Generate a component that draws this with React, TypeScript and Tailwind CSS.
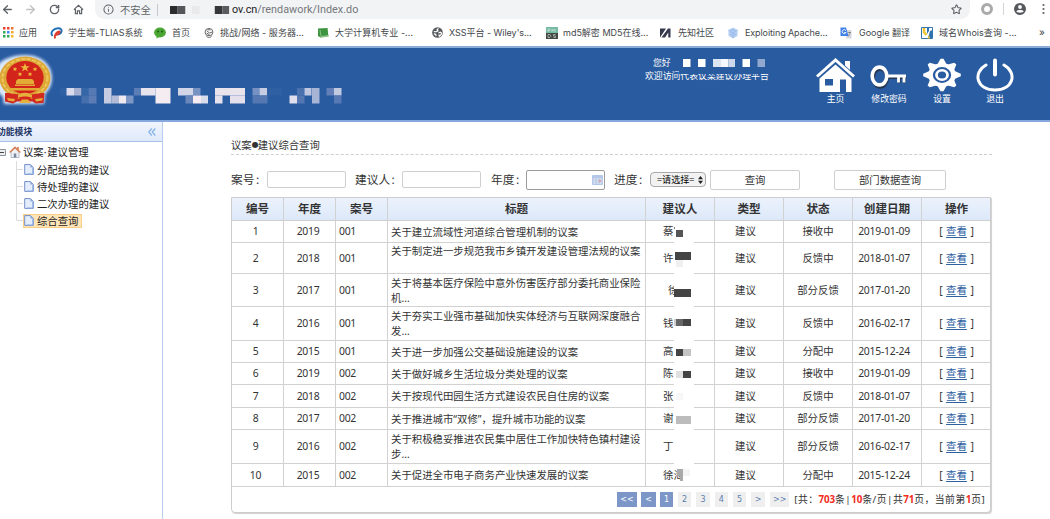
import React from "react";
import { ArrowLeft, ArrowRight, RotateCw, Star, Info } from "lucide-react";

const GRID =
  "grid grid-cols-[52px_52px_52px_258px_69px_69px_69px_69px_69px]";

type Block = [number, number, number, number, string];

interface Row {
  h: string;
  year: string;
  no: string;
  title: string[];
  name: string;
  pad?: string;
  status: string;
  date: string;
  blocks: Block[];
}

/* block coordinates are relative to the 20px wide strip beside each name */
const rows: Row[] = [
  { h: "h-[22px]", year: "2019", no: "001", title: ["关于建立流域性河道综合管理机制的议案"], name: "蔡", status: "接收中", date: "2019-01-09", blocks: [[0, 6, 1, 2, "#777"], [2, 9, 7, 7, "#555"]] },
  { h: "h-[31px]", year: "2018", no: "001", title: ["关于制定进一步规范我市乡镇开发建设管理法规的议案", ""], name: "许", status: "反馈中", date: "2018-01-07", blocks: [[1, 9, 16, 8, "#444"], [2, 17, 7, 7, "#f0f0f0"]] },
  { h: "h-[33px]", year: "2017", no: "001", title: ["关于将基本医疗保险中意外伤害医疗部分委托商业保险", "机…"], name: "徐", pad: "pl-[22px]", status: "部分反馈", date: "2017-01-20", blocks: [[0, 15, 17, 8, "#444"]] },
  { h: "h-[34px]", year: "2016", no: "001", title: ["关于夯实工业强市基础加快实体经济与互联网深度融合", "发…"], name: "钱", status: "反馈中", date: "2016-02-17", blocks: [[0, 12, 2, 7, "#ccc"], [2, 12, 7, 7, "#666"], [9, 12, 8, 7, "#444"]] },
  { h: "h-[22px]", year: "2015", no: "001", title: ["关于进一步加强公交基础设施建设的议案"], name: "高", status: "分配中", date: "2015-12-24", blocks: [[2, 8, 7, 7, "#444"], [9, 8, 8, 7, "#c4c4c4"]] },
  { h: "h-[22px]", year: "2019", no: "002", title: ["关于做好城乡生活垃圾分类处理的议案"], name: "陈", status: "接收中", date: "2019-01-09", blocks: [[2, 8, 7, 7, "#e0e0e0"], [9, 8, 8, 7, "#444"]] },
  { h: "h-[23px]", year: "2018", no: "002", title: ["关于按现代田园生活方式建设农民自住房的议案"], name: "张", status: "反馈中", date: "2018-01-07", blocks: [[2, 8, 7, 7, "#f7f7f7"]] },
  { h: "h-[22px]", year: "2017", no: "002", title: ["关于推进城市“双修”，提升城市功能的议案"], name: "谢", status: "部分反馈", date: "2017-01-20", blocks: [[2, 8, 15, 8, "#bcbcbc"]] },
  { h: "h-[34px]", year: "2016", no: "002", title: ["关于积极稳妥推进农民集中居住工作加快特色镇村建设", "步…"], name: "丁", status: "部分反馈", date: "2016-02-17", blocks: [] },
  { h: "h-[23px]", year: "2015", no: "002", title: ["关于促进全市电子商务产业快速发展的议案"], name: "徐海", status: "分配中", date: "2015-12-24", blocks: [[3, 5, 6, 7, "#aaa"], [6, 12, 3, 5, "#aaa"], [9, 5, 7, 7, "#f4f4f4"]] },
];

function HomeOutline() {
  return (
    <svg viewBox="0 0 12 12" className="h-[11px] w-[11px]" fill="none" stroke="#5f6368" strokeWidth="1.3">
      <path d="M1 6.2 6 1.4l5 4.8M2.6 5.4v5.2h2.2V7.4h2.4v3.2h2.2V5.4" />
    </svg>
  );
}

const bookmarks: { w: string; gap: string; text: string; track: string; icon: React.ReactNode }[] = [
  {
    w: "w-[47px]", gap: "gap-[5px]", text: "应用", track: "",
    icon: (
      <svg viewBox="0 0 11 11" className="h-[11px] w-[11px] shrink-0">
        {["#ea4335", "#ea4335", "#f0762c", "#34a853", "#4285f4", "#f4a52c", "#34a853", "#34a853", "#f4b72c"].map((c, i) => (
          <rect key={i} x={(i % 3) * 4} y={Math.floor(i / 3) * 4} width="2.5" height="2.5" fill={c} />
        ))}
      </svg>
    ),
  },
  {
    w: "w-[104px]", gap: "gap-[5px]", text: "学生端-TLIAS系统", track: "",
    icon: (
      <svg viewBox="0 0 13 12" className="h-[12px] w-[13px] shrink-0" fill="none">
        <path d="M2.500 9C-.5 5 4 1 8.500 1.200 13 1.500 12.500 6 8 7.500" stroke="#1f6fb5" strokeWidth="1.900" />
        <path d="M5 11.500C4 8 6.500 4.500 9.500 4.500c.5 2-2 3.300-4 3.500" stroke="#e03a30" strokeWidth="1.900" />
      </svg>
    ),
  },
  {
    w: "w-[50px]", gap: "gap-[6px]", text: "首页", track: "",
    icon: (
      <svg viewBox="0 0 12 12" className="h-[12px] w-[12px] shrink-0">
        <ellipse cx="6" cy="5.500" rx="5.900" ry="4.900" fill="#4aa733" />
        <path d="M2.500 9v2.500L6 9.500z" fill="#4aa733" />
        <circle cx="4" cy="4.500" r=".9" fill="#174f10" />
        <circle cx="8" cy="4.500" r=".9" fill="#174f10" />
      </svg>
    ),
  },
  {
    w: "w-[113px]", gap: "gap-[6px]", text: "挑战/网络 - 服务器...", track: "tracking-[0.05px]",
    icon: (
      <svg viewBox="0 0 11 12" className="h-[12px] w-[10px] shrink-0" fill="none" stroke="#666" strokeWidth="1.1">
        <ellipse cx="5.500" cy="5" rx="4.300" ry="4" />
        <path d="M3 3.500l3 2.500 3-1M3 6l3 2M2.500 9c1 2.500 5 2.500 6 0M4 2.500h3" />
      </svg>
    ),
  },
  {
    w: "w-[115px]", gap: "gap-[6px]", text: "大学计算机专业 -...", track: "tracking-[0.05px]",
    icon: (
      <svg viewBox="0 0 12 12" className="h-[12px] w-[12px] shrink-0">
        <path d="M1 1.500 10.500 1l1 8.500-8 1L1 9z" fill="#3f9440" />
        <path d="M3 3l1 6.500 7.500-1M4 10.300l7-1" stroke="#a9d7a4" strokeWidth=".7" fill="none" />
      </svg>
    ),
  },
  {
    w: "w-[114px]", gap: "gap-[6px]", text: "XSS平台 - Wiley's...", track: "tracking-[-0.04px]",
    icon: (
      <svg viewBox="0 0 12 12" className="h-[11px] w-[11px] shrink-0">
        <circle cx="6" cy="6" r="5.800" fill="#55595e" />
        <path d="M7 1.500 5.500 3l1 1.200-1.500 1L2 5M7 6.500l2-.8 1.500.8-.7 2L8 10l-.5-2M2 7.500 4 8l.5 2" stroke="#fff" strokeWidth="1.300" fill="none" />
      </svg>
    ),
  },
  {
    w: "w-[114px]", gap: "gap-[5px]", text: "md5解密 MD5在线...", track: "",
    icon: (
      <svg viewBox="0 0 12 12" className="h-[12px] w-[12px] shrink-0">
        <path d="M0 0h12v6H0z" fill="#76b9a4" />
        <path d="M0 6h12v6H0z" fill="#444845" />
        <path d="M2 5V2h2v1.500H2M6 5V2l1.500 2L9 2v3M2 7.500v3h2l1-1-1-2zM9.500 7.500h-2V9h2v1.500h-2" stroke="#d8e5df" strokeWidth=".6" fill="none" />
      </svg>
    ),
  },
  {
    w: "w-[68px]", gap: "gap-[7px]", text: "先知社区", track: "",
    icon: (
      <svg viewBox="0 0 11 10" className="h-[10px] w-[11px] shrink-0">
        <path d="M0 .5h6L0 9.500zM10.500.5v9H8.300V4.500L5 9.500H1.500L8 .5z" fill="#34384c" />
      </svg>
    ),
  },
  {
    w: "w-[112px]", gap: "gap-[7px]", text: "Exploiting Apache...", track: "tracking-[-0.1px]",
    icon: (
      <svg viewBox="0 0 10 12" className="h-[12px] w-[10px] shrink-0">
        <path d="M5 .5 9.500 3v6L5 11.500.5 9V3z" fill="#b4cef2" />
        <path d="M.5 3 5 6l4.500-3M5 6v5M2 7l2 1M6 8l2-1M3 3l4 0" stroke="#8fb4ea" strokeWidth=".8" fill="none" />
      </svg>
    ),
  },
  {
    w: "w-[81px]", gap: "gap-[7px]", text: "Google 翻译", track: "",
    icon: (
      <svg viewBox="0 0 12 12" className="h-[12px] w-[12px] shrink-0">
        <path d="M5 3h6.500v8.500H6.500z" fill="#d5d8dd" />
        <path d="M.5.500h5.500l2.500 8.500h-8z" fill="#4281e8" />
        <path d="M5.800 3.500A2 2 0 1 0 6 5.500H4.300" stroke="#fff" strokeWidth=".9" fill="none" />
        <path d="M8 5.500h3M9.500 5v1M8.200 9.500l2.300-4" stroke="#777" strokeWidth=".7" fill="none" />
      </svg>
    ),
  },
  {
    w: "w-[118px]", gap: "gap-[6px]", text: "域名Whois查询 -...", track: "tracking-[0.05px]",
    icon: (
      <svg viewBox="0 0 12 12" className="h-[12px] w-[12px] shrink-0">
        <path d="M.5.500h11v11H.500z" fill="#fff" stroke="#3575ad" />
        <path d="M3 1v4l2.500 3" stroke="#efc42d" strokeWidth="2.500" fill="none" />
        <path d="M6 7V1h2v3M9 4l-2 7h4.500V3z" fill="#2f73ae" />
        <path d="M8 8l1 3.500H6.500z" fill="#efc42d" />
      </svg>
    ),
  },
];

function Browser() {
  return (
    <div className="h-[46px] bg-white font-['Inter','Noto_Sans_CJK_SC',sans-serif]">
      <div className="flex h-[19px] items-start">
        <div className="flex h-[18px] w-[95px] shrink-0 items-center pl-[1px]">
          <ArrowLeft className="h-[13px] w-[13px] text-[#5f6368]" strokeWidth={2.4} />
          <ArrowRight className="ml-[10px] h-[13px] w-[13px] text-[#bfc1c4]" strokeWidth={2.4} />
          <RotateCw className="ml-[12px] h-[11px] w-[11px] text-[#5f6368]" strokeWidth={3} />
          <span className="ml-[13px]"><HomeOutline /></span>
        </div>
        <div className="flex h-[19px] w-[875px] shrink-0 items-center rounded-b-[9px] bg-[#f1f3f4] pl-[8px] text-[#5f6368]">
          <Info className="h-[11px] w-[11px] shrink-0" strokeWidth={2.2} />
          <span className="ml-[6px] w-[31px] text-[10.3px] leading-[18px]">不安全</span>
          <span className="ml-[6px] h-[12px] w-px bg-[#c4c6c9]" />
          <svg viewBox="0 0 64 8" className="ml-[12px] mt-px h-[8px] w-[61px] shrink-0" preserveAspectRatio="none">
            <rect x="0" width="8" height="8" fill="#2c2c2e" />
            <rect x="8" width="8" height="8" fill="#55565a" />
            <rect x="23" width="8" height="8" fill="#e9e9eb" />
            <rect x="47" width="8" height="8" fill="#37373a" />
            <rect x="55" width="7" height="8" fill="#5b5c60" />
          </svg>
          <span className="ml-[1px] font-['Roboto',sans-serif] text-[10.8px] leading-[18px] tracking-[0.02px] text-[#202124]">
            ov.cn<span className="text-[#74777b]">/rendawork/Index.do</span>
          </span>
          <Star className="ml-auto mr-[8px] h-[11px] w-[11px]" strokeWidth={2.4} />
        </div>
        <div className="flex h-[18px] flex-1 items-center pl-[11px]">
          <span className="h-[12px] w-[12px] shrink-0 rounded-full border-[3px] border-[#aaa]" />
          <span className="ml-[10px] h-[12px] w-px bg-[#d4d4d4]" />
          <svg viewBox="0 0 12 12" className="ml-[10px] h-[12px] w-[12px] shrink-0">
            <circle cx="6" cy="6" r="6" fill="#55595e" />
            <circle cx="6" cy="4" r="1.900" fill="#fff" />
            <path d="M2.300 8.500C3.500 6.600 8.500 6.600 9.700 8.500 8.500 10 3.500 10 2.300 8.500z" fill="#fff" />
          </svg>
          <svg viewBox="0 0 3 12" className="ml-[16px] h-[12px] w-[3px] shrink-0" fill="#5f6368">
            <circle cx="1.500" cy="2" r="1.100" /><circle cx="1.500" cy="6" r="1.100" /><circle cx="1.500" cy="10" r="1.100" />
          </svg>
        </div>
      </div>
      <div className="flex h-[27px] items-center pl-[3px] text-[9px] text-[#44474a]">
        {bookmarks.map((b) => (
          <div key={b.text} className={`flex shrink-0 items-center whitespace-nowrap ${b.w} ${b.gap}`}>
            {b.icon}
            <span className={b.track}>{b.text}</span>
          </div>
        ))}
        <span className="text-[10px]">»</span>
      </div>
    </div>
  );
}

function Emblem() {
  return (
    <svg viewBox="0 0 56 58" className="h-[58px] w-[56px] shrink-0">
      <defs>
        <filter id="glow" x="-20%" y="-20%" width="140%" height="140%"><feGaussianBlur stdDeviation="1.400" /></filter>
      </defs>
      <path d="M25 3C43 3 52 14 52 26c0 8-4 13-7 16l-1 10H4L3 45-3 39V14C2 7 12 3 25 3z" fill="#dce9fb" filter="url(#glow)" />
      <path d="M5 41h39.500l-1 10-8 .5-3-2H17l-4 2-8-2z" fill="#d02a20" />
      <ellipse cx="25" cy="26" rx="25.500" ry="21.500" fill="#dca736" />
      <ellipse cx="25" cy="26" rx="22.500" ry="19" fill="none" stroke="#edc657" strokeWidth="2" strokeDasharray="4 1.500" />
      <ellipse cx="25" cy="25.500" rx="18.700" ry="16.500" fill="#d3241c" />
      <path d="M25 11l1.200 3.200h3.500l-2.800 2.100 1 3.300-2.900-2-2.900 2 1-3.300-2.800-2.100h3.500z" fill="#edb83b" />
      {[[15, 17], [35, 17], [20, 22], [30, 22]].map(([x, y]) => (
        <path key={x} d={`M${x} ${y - 2}l.7 1.300 1.500.2-1.100 1 .3 1.500-1.400-.7-1.400.7.3-1.500-1.100-1 1.500-.2z`} fill="#edb83b" />
      ))}
      <path d="M18 27h14l2 2v3H16v-3zM15 32.500h20v1.500H15zM9 36h32l-2 2.500H11z" fill="#e3aa35" />
      <path d="M6 41c8 0 10 2 13 1 4-2 8-2 12 0 3 1 5-1 13-1l-4 5-9 0-3 4h-6l-3-4-9 0z" fill="#d3291f" />
      <path d="M18 43c3-3 11-3 14 0v3c-3-2-11-2-14 0zM7 46l8 1-1 2.500-6-1zM43 46l-8 1 1 2.500 6-1zM22 47.500h6l3 3.500H19z" fill="#e5b03c" />
    </svg>
  );
}

const mosaic: Block[] = [
  [0, 0, 6.500, 7.500, "#3061a5"], [6.500, 0, 7.500, 7.500, "#dadced"], [14, 0, 7.500, 7.500, "#a6b1d2"], [21.500, 0, 7, 7.500, "#3566a8"], [28.500, 0, 8, 7.500, "#5579b3"],
  [21.500, 7.500, 7, 8, "#466fae"], [28.500, 7.500, 8, 8, "#5b7cb5"],
  [44, 0, 7.500, 15.500, "#c5cbe1"], [51.500, 7.500, 7.500, 8, "#b1bbd8"], [59, 7.500, 7, 8, "#f0e9f0"], [66, 7.500, 7.500, 8, "#7e97c5"],
  [74, 0, 7, 7.500, "#5c7db6"], [81, 0, 14.500, 7.500, "#e8e4ed"], [95.500, 0, 15, 15.500, "#f4ecf1"],
  [118, 0, 15, 7.500, "#d1d5e7"], [133, 0, 7.500, 7.500, "#7792c3"], [125.500, 7.500, 7.500, 8, "#6987bb"], [133, 7.500, 8, 8, "#f5ebf1"], [141, 7.500, 7, 8, "#d9dceb"],
  [155, 0, 30, 7.500, "#e9e4ec"], [155, 7.500, 7.500, 8, "#e6e2ec"], [170, 7.500, 15, 8, "#e4e0eb"],
  [192.500, 0, 7, 7.500, "#7791c2"], [199.500, 0, 7.500, 7.500, "#c6cce1"], [207, 0, 15, 7.500, "#3060a4"], [192.500, 7.500, 15, 8, "#5578b2"],
  [237, 0, 7.500, 7.500, "#4a72af"], [244.500, 0, 7, 7.500, "#bec7df"], [229.500, 7.500, 7.500, 8, "#dfdfed"], [237, 7.500, 7.500, 8, "#5477b2"],
  [252, 0, 7.500, 15.500, "#a7b4d5"], [266.500, 0, 7.500, 7.500, "#627fb8"], [274, 0, 7.500, 7.500, "#c1c9e0"], [274, 7.500, 7.500, 8, "#5678b3"],
];

function Banner() {
  return (
    <header className="flex h-[76px] items-start border-y-[2px] border-t-[#8babd8] border-b-[#85a9dc] bg-[#295ba1] font-['Noto_Sans_CJK_SC',sans-serif] text-white">
      <div className="mt-[4px] w-[60px] shrink-0"><Emblem /></div>
      <svg viewBox="0 0 282 16" className="mt-[40px] h-[16px] w-[282px] shrink-0">
        {mosaic.map(([x, y, w, h, c], i) => <rect key={i} x={x} y={y} width={w} height={h} fill={c} />)}
      </svg>
      <div className="ml-[303px] mt-[8px] w-[135px] shrink-0 text-[8.85px] leading-[13px]">
        <div className="flex h-[13px] items-center pl-[8px]">
          <span className="w-[30px]">您好</span>
          <svg viewBox="0 0 82 8" className="h-[8px] w-[82px]">
            <rect width="7.500" height="8" fill="#fff" /><rect x="15" width="7.500" height="8" fill="#fff" />
            <rect x="30" width="8" height="8" fill="#dbe5f1" /><rect x="38" width="7.500" height="8" fill="#f4f8fc" /><rect x="45.500" width="6.500" height="8" fill="#ccd8ea" />
            <rect x="59.500" width="7.500" height="8" fill="#fff" /><rect x="74.500" width="7.500" height="8" fill="#91a9d0" />
          </svg>
        </div>
        <div className="relative h-[13px] whitespace-nowrap">
          欢迎访问代表议案建议办理平台
          <span className="absolute left-[34px] top-0 h-[5px] w-[95px] bg-[#295ba1]" />
        </div>
      </div>
      <nav className="ml-[28px] mt-[10px] flex text-center text-[8.85px] leading-[14px]">
        <div className="ml-[8px] flex w-[39px] flex-col items-center">
          <svg viewBox="0 0 39 34" className="h-[34px] w-[39px]">
            <path d="M1 18.500 19.500 2 38 18.500" stroke="#fff" strokeWidth="3" fill="none" />
            <path d="M29 3h5v9l-5-4.500z" fill="#fff" />
            <path fillRule="evenodd" d="M3.500 20.500 19.500 6.500l16 14V34H30V21.500h-6V34H3.500zM9 21v6.500h8V21z" fill="#fff" />
          </svg>
          主页
        </div>
        <div className="ml-[14px] flex w-[40px] flex-col items-center">
          <svg viewBox="0 0 40 34" className="h-[34px] w-[40px]" fill="none">
            <g stroke="#25364f" transform="translate(.2 3)"><ellipse cx="11" cy="17" rx="7" ry="9" strokeWidth="3.500" /><path d="M19 16.500h18M30 17v5M35 17v5" strokeWidth="3" /></g>
            <g stroke="#fff" transform="translate(0 2)"><ellipse cx="10.500" cy="16" rx="7.300" ry="8.900" strokeWidth="3.600" /><path d="M18 16h19M29.500 16v6.500M35 16v6.500" strokeWidth="2.800" /></g>
          </svg>
          <span className="whitespace-nowrap">修改密码</span>
        </div>
        <div className="ml-[14px] flex w-[38px] flex-col items-center">
          <svg viewBox="0 0 38 34" className="h-[34px] w-[38px]">
            <g transform="translate(19 17) scale(1 .86)" fill="none" stroke="#fff">
              {[0, 45, 90, 135, 180, 225, 270, 315].map((a) => (
                <path key={a} d="M-4.800-12-1.500-18.800h3L4.800-12z" fill="#fff" stroke="none" transform={`rotate(${a})`} />
              ))}
              <circle r="11.500" strokeWidth="4.600" />
              <circle r="5.500" strokeWidth="2.800" />
            </g>
          </svg>
          设置
        </div>
        <div className="ml-[15px] flex w-[38px] flex-col items-center">
          <svg viewBox="0 0 38 34" className="h-[34px] w-[38px]" fill="none" stroke="#fff" strokeLinecap="round">
            <path d="M10 7C-4 15 1 32 19 32S42 15 28 7" strokeWidth="3" />
            <path d="M19 2.500v14" strokeWidth="4" />
          </svg>
          退出
        </div>
      </nav>
    </header>
  );
}

function PageIcon() {
  return (
    <svg viewBox="0 0 10 11" className="h-[11px] w-[10px] shrink-0">
      <path d="M.7.600h5.800l2.800 2.800v7H.7z" fill="#e3edfb" stroke="#738fca" strokeWidth="1" />
      <path d="M6.300.600v3h3z" fill="#8eabdb" />
      <path d="M8.800 4v6H3" stroke="#91aee3" strokeWidth="1" fill="none" />
    </svg>
  );
}

function Sidebar() {
  const items = ["分配给我的建议", "待处理的建议", "二次办理的建议", "综合查询"];
  return (
    <aside className="w-[163px] shrink-0 border-r border-[#b9cdee] bg-white text-[10.35px] text-[#222]">
      <div className="flex h-[20px] items-center justify-between overflow-hidden border-b border-[#a7c1e6] bg-linear-to-b from-[#f1f5fe] to-[#dfe9fb] pr-[6px]">
        <span className="-ml-[3px] whitespace-nowrap text-[8.8px] font-bold text-[#1c3464]">功能模块</span>
        <svg viewBox="0 0 8 8" className="h-[8px] w-[8px]" fill="none" stroke="#86b3e5" strokeWidth="1.300">
          <path d="M3.800.500.800 4l3 3.500M7.300.500l-3 3.500 3 3.500" />
        </svg>
      </div>
      <div className="flex h-[17px] items-center pt-[3px]">
        <svg viewBox="0 0 6 7" className="h-[7px] w-[6px] shrink-0">
          <path d="M-2 .5h7.500v6H-2z" fill="#eee" stroke="#8993a2" /><path d="M0 3.500h4" stroke="#444" />
        </svg>
        <svg viewBox="0 0 12 12" className="ml-[3px] h-[12px] w-[12px] shrink-0">
          <path d="M2 6v5.500h8V6L6 2z" fill="#eef1f6" stroke="#9ba5b7" strokeWidth=".7" />
          <path d="M.7 6.500 6 1.500l5.300 5M9 1v3" stroke="#d8835a" strokeWidth="1.700" fill="none" />
          <path d="M4.800 7.500h2.500v4H4.800z" fill="#7b879c" />
        </svg>
        <span className="ml-[2px] whitespace-nowrap">议案<span className="inline-block w-[3.500px] font-['Noto_Sans',sans-serif]">·</span>建议管理</span>
      </div>
      <ul className="pt-[2px]">
        {items.map((t, i) => (
          <li key={t} className="flex h-[17px] items-center">
            <svg viewBox="0 0 23 17" className="h-[17px] w-[23px] shrink-0">
              <path d={i === 3 ? "M16.500 0v8.500H23" : "M16.500 0v17M16.500 8.500H23"} stroke="#dcdcdc" fill="none" />
            </svg>
            <div className={`flex h-[14px] items-center gap-[3px] pl-[1px] pr-[4px] ${i === 3 ? "bg-[#fee5b8] outline outline-1 -outline-offset-1 outline-[#f8cf85]" : ""}`}>
              <PageIcon />
              <span className="whitespace-nowrap leading-[13px]">{t}</span>
            </div>
          </li>
        ))}
      </ul>
    </aside>
  );
}

function Filters() {
  const input = "rounded-[2px] border border-[#cfcfcf] bg-white";
  const label = "shrink-0 whitespace-nowrap pb-[2px]";
  return (
    <div className="flex h-[41px] items-center text-[11.700px] text-[#333]">
      <span className={`w-[36px] ${label}`}>案号<span className="ml-[1.500px]">:</span></span>
      <span className={`h-[17px] w-[79px] ${input}`} />
      <span className={`ml-[9px] w-[47px] ${label}`}>建议人<span className="ml-[1.500px]">:</span></span>
      <span className={`h-[17px] w-[79px] ${input}`} />
      <span className={`ml-[10px] w-[35px] ${label}`}>年度<span className="ml-[1.500px]">:</span></span>
      <span className="flex h-[20px] w-[79px] items-center justify-end rounded-[2px] border border-[#9b9b9b] pr-[1px]">
        <svg viewBox="0 0 11 10" className="h-[10px] w-[11px]">
          <rect width="11" height="10" rx="1" fill="#b5c7e9" /><path d="M1.500 3.500h8v5h-8z" fill="#eef3fb" />
          <path d="M1.500 5h8M1.500 7h8M4 3.500v5M7 3.500v5" stroke="#9fb2d8" strokeWidth=".7" /><path d="M7 5h2v2H7z" fill="#dd9f9a" />
        </svg>
      </span>
      <span className={`ml-[9px] w-[36px] ${label}`}>进度<span className="ml-[1.500px]">:</span></span>
      <span className="flex h-[15px] w-[56px] items-center justify-between rounded-[4px] border border-[#a9a9a9] bg-[#f2f2f2] pl-[6px] pr-[2px] text-[9.100px] text-black">
        <span className="whitespace-nowrap leading-[11px]">=请选择=</span>
        <svg viewBox="0 0 5 8" className="h-[8px] w-[5px] shrink-0"><path d="M0 3.300 2.500 0 5 3.300zM0 4.700 2.500 8 5 4.700z" fill="#222" /></svg>
      </span>
      <button className="ml-[4px] h-[20px] w-[90px] rounded-[2px] border border-[#cfcfcf] text-[10.350px]">查询</button>
      <button className="ml-[34px] h-[20px] w-[112px] rounded-[2px] border border-[#cfcfcf] text-[10.350px]">部门数据查询</button>
    </div>
  );
}

function Strip({ blocks }: { blocks: Block[] }) {
  return (
    <svg viewBox="0 0 20 35" className="absolute left-[28px] top-0 h-[35px] w-[20px]">
      {blocks.map(([x, y, w, h, c], i) => <rect key={i} x={x} y={y} width={w} height={h} fill={c} />)}
    </svg>
  );
}

function Table() {
  const heads = ["编号", "年度", "案号", "标题", "建议人", "类型", "状态", "创建日期", "操作"];
  const cell = "flex items-center justify-center border-r border-[#d2d2d2] pt-px";
  return (
    <section className="h-[316px] w-[760px] rounded-b-[4px] border border-[#cdcdcd] bg-white font-['Noto_Sans','Noto_Sans_CJK_SC',sans-serif] text-[10.400px] text-[#333] shadow-[1px_1px_1px_#cfcfcf]">
      <div className={`${GRID} h-[23px] border-b border-[#cfcfcf] bg-linear-to-b from-[#ecf2fc] to-[#dce8f9] font-['Noto_Sans_CJK_SC',sans-serif] text-[11.600px] font-bold`}>
        {heads.map((h, i) => <div key={h} className={i === 8 ? "flex items-center justify-center" : "flex items-center justify-center border-r border-[#d2d2d2]"}>{h}</div>)}
      </div>
      {rows.map((r, i) => (
        <div key={i} className={`${GRID} ${r.h} border-b border-[#d2d2d2]`}>
          <div className={`${cell} pr-[4px] tracking-[-0.300px]`}>{i + 1}</div>
          <div className={`${cell} pr-[3px] tracking-[-0.300px]`}>{r.year}</div>
          <div className="flex items-center border-r border-[#d2d2d2] pl-[3px] pt-px tracking-[-0.300px]">{r.no}</div>
          <div className="flex flex-col justify-center whitespace-nowrap border-r border-[#d2d2d2] pl-[3px] pt-px leading-[15px]">
            {r.title.map((t, k) => <div key={k} className="h-[15px]">{t}</div>)}
          </div>
          <div className={`relative flex items-center border-r border-[#d2d2d2] pt-px ${r.pad ?? "pl-[17px]"}`}>
            {r.name}
            <span className={`absolute -bottom-px top-0 bg-white ${i === 9 ? "left-[34px] w-[14px]" : "left-[28px] w-[20px]"}`} />
            {i === 9 && <span className="absolute -bottom-px left-[28px] h-px w-[20px] bg-[#d2d2d2]" />}
            <Strip blocks={r.blocks} />
          </div>
          <div className={`${cell} pr-[7px]`}>建议</div>
          <div className={cell}>{r.status}</div>
          <div className={`${cell} pr-[6px] tracking-[-0.250px]`}>{r.date}</div>
          <div className="flex items-center justify-center gap-[3.500px] pt-px">
            <span>[</span><a href="#" className="text-[#2f619f] underline underline-offset-2">查看</a><span>]</span>
          </div>
        </div>
      ))}
      <Pager />
    </section>
  );
}

function Pager() {
  const on = "bg-[#7c96c8] text-white";
  const off = "bg-[#efefef] text-[#5c7fb0]";
  const btn = "flex h-[15px] items-center justify-center";
  return (
    <div className="flex h-[25px] items-center whitespace-nowrap pl-[385px] font-['DejaVu_Sans','Noto_Sans_CJK_SC',sans-serif] text-[8px] [&>*]:shrink-0">
      <span className={`${btn} ${on} w-[20px]`}>&lt;&lt;</span>
      <span className={`${btn} ${on} ml-[4px] w-[15px]`}>&lt;</span>
      <span className={`${btn} ${on} ml-[4px] w-[13px]`}>1</span>
      {["2", "3", "4", "5"].map((n) => <span key={n} className={`${btn} ${off} ml-[5px] w-[13.300px]`}>{n}</span>)}
      <span className={`${btn} ${off} ml-[5px] w-[14px]`}>&gt;</span>
      <span className={`${btn} ${off} ml-[5px] w-[19px]`}>&gt;&gt;</span>
      <span className="ml-[5px] pt-px font-['Noto_Sans','Noto_Sans_CJK_SC',sans-serif] text-[9.800px] tracking-[0.500px]">
        [共：<b className="tracking-[-0.100px] text-[#f12c1c]">703</b>条|<b className="tracking-[-0.100px] text-[#f12c1c]">10</b>条/页|共<b className="tracking-[-0.100px] text-[#f12c1c]">71</b>页，当前第<b className="tracking-[-0.100px] text-[#f12c1c]">1</b>页]
      </span>
    </div>
  );
}

export default function App() {
  return (
    <div lang="zh-CN" className="h-[519px] w-[1050px] overflow-hidden bg-white font-['Noto_Sans_CJK_SC',sans-serif]">
      <Browser />
      <Banner />
      <div className="flex h-[397px]">
        <Sidebar />
        <main className="ml-[68px] w-[761px]">
          <h1 className="flex h-[33px] items-end border-b border-dashed border-[#cfcfcf] pb-[3px] text-[10.350px] leading-[13px] text-[#333]">
            议案<span className="w-[6px] text-center font-['DejaVu_Sans',sans-serif] text-[8px]">●</span>建议综合查询
          </h1>
          <div className="pt-[4px]"><Filters /></div>
          <div className="-mt-[3px]"><Table /></div>
        </main>
      </div>
    </div>
  );
}
